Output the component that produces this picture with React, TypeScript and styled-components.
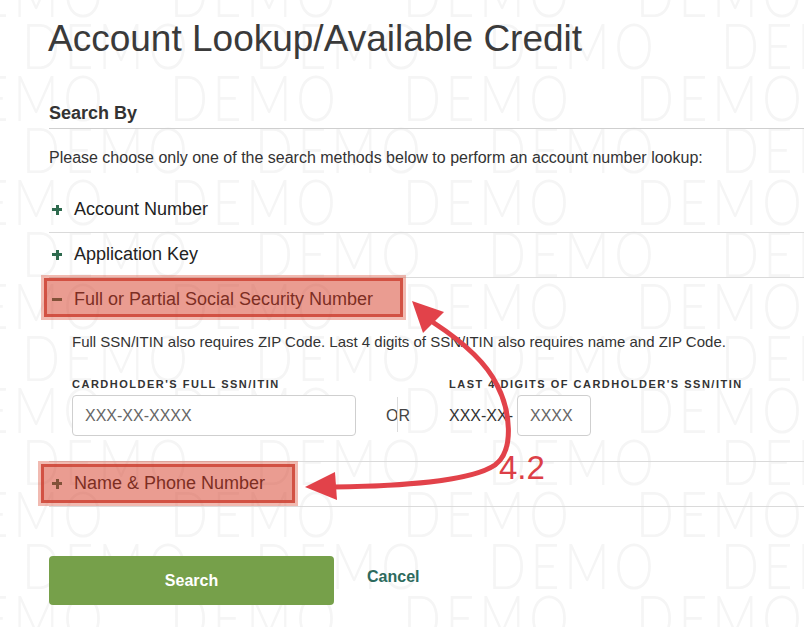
import styled, { createGlobalStyle } from "styled-components";

const GlobalStyle = createGlobalStyle`
  html, body {
    margin: 0;
    padding: 0;
    background: #fff;
  }
  body {
    font-family: "Liberation Sans", Arial, sans-serif;
  }
`;

const Page = styled.div`
  position: relative;
  width: 804px;
  height: 627px;
  overflow: hidden;
  background: #fff;
`;

const Watermark = styled.div`
  position: absolute;
  inset: 0;
  z-index: 0;
  pointer-events: none;
  margin-top: -33px;
`;

const WatermarkRow = styled.div<{ $offset: number }>`
  display: flex;
  height: 52px;
  line-height: 52px;
  margin-left: ${(p) => p.$offset}px;
  white-space: nowrap;
`;

const WatermarkWord = styled.span`
  flex: 0 0 233px;
  display: block;
  font-family: Lato, "Open Sans", sans-serif;
  font-weight: 300;
  font-size: 64px;
  letter-spacing: 6px;
  color: #f5f5f5;
  transform: scaleX(0.78);
  transform-origin: left center;
`;

const Content = styled.div`
  position: relative;
  z-index: 1;
  padding: 17px 0 0 49px;
`;

const Title = styled.h1`
  margin: 0 0 0 -1px;
  font-size: 37px;
  line-height: 44px;
  font-weight: 400;
  color: #3a3a3a;
`;

const SectionHeading = styled.h2`
  margin: 41px 0 0;
  padding-bottom: 4px;
  border-bottom: 1px solid #cfcfcf;
  font-size: 18px;
  line-height: 22px;
  font-weight: 700;
  color: #333;
`;

const Intro = styled.p`
  margin: 19px 0 0;
  font-size: 16px;
  line-height: 20px;
  color: #333;
`;

const Accordion = styled.div`
  margin-top: 20px;
`;

const Item = styled.div`
  border-bottom: 1px solid #dadada;
`;

const ItemHeader = styled.div`
  display: flex;
  align-items: center;
  padding: 10px 0 12px;
  font-size: 18px;
  line-height: 22px;
  color: #222;
`;

const ToggleIcon = styled.span<{ $open: boolean }>`
  position: relative;
  flex: 0 0 10px;
  height: 10px;
  margin: 1px 12px 0 3px;

  &::before,
  &::after {
    content: "";
    position: absolute;
    background: #2e6a4e;
  }
  &::before {
    left: 0;
    right: 0;
    top: 3.5px;
    height: 3px;
  }
  &::after {
    display: ${(p) => (p.$open ? "none" : "block")};
    top: 0;
    bottom: 0;
    left: 3.5px;
    width: 3px;
  }
`;

const Panel = styled.div`
  padding: 10px 0 25px 23px;
`;

const Note = styled.p`
  margin: 0;
  font-size: 15px;
  line-height: 19px;
  color: #333;
`;

const Fields = styled.div`
  display: flex;
  align-items: flex-end;
  margin-top: 26px;
`;

const Field = styled.div`
  display: flex;
  flex-direction: column;
`;

const Label = styled.label`
  margin-bottom: 4px;
  font-size: 11px;
  line-height: 14px;
  font-weight: 700;
  letter-spacing: 1.5px;
  color: #333;
  white-space: nowrap;
`;

const Input = styled.input<{ $width: number }>`
  box-sizing: border-box;
  width: ${(p) => p.$width}px;
  height: 41px;
  padding: 0 12px;
  border: 1px solid #cfcfcf;
  border-radius: 4px;
  background: #fff;
  font-family: "Liberation Sans", Arial, sans-serif;
  font-size: 16px;
  color: #333;
  outline: none;

  &::placeholder {
    color: #666;
  }
`;

const OrBox = styled.div`
  position: relative;
  display: flex;
  align-items: center;
  justify-content: center;
  width: 24px;
  height: 41px;
  margin: 0 39px 0 30px;
  font-size: 16px;
  color: #444;

  &::before {
    content: "";
    position: absolute;
    left: 11px;
    top: 2px;
    bottom: 4px;
    width: 1px;
    background: #dcdcdc;
  }
`;

const InputRow = styled.div`
  display: flex;
  align-items: center;
`;

const Prefix = styled.span`
  margin-right: 4px;
  font-size: 16px;
  color: #333;
`;

const Actions = styled.div`
  display: flex;
  align-items: center;
  margin-top: 49px;
`;

const SearchButton = styled.button`
  width: 285px;
  height: 49px;
  border: none;
  border-radius: 4px;
  background: #76a04a;
  color: #fff;
  font-family: "Liberation Sans", Arial, sans-serif;
  font-size: 16px;
  font-weight: 700;
  cursor: pointer;
`;

const CancelLink = styled.a`
  margin-left: 33px;
  padding-bottom: 7px;
  font-size: 16px;
  font-weight: 700;
  color: #2c6a5d;
  text-decoration: none;
  cursor: pointer;
`;

const Highlight = styled.div<{ $x: number; $y: number; $w: number; $h: number }>`
  position: absolute;
  z-index: 2;
  left: ${(p) => p.$x}px;
  top: ${(p) => p.$y}px;
  width: ${(p) => p.$w}px;
  height: ${(p) => p.$h}px;
  box-sizing: border-box;
  border: 3px solid rgba(222, 90, 70, 0.42);
  background: rgba(214, 58, 36, 0.5);
  background-clip: padding-box;
  box-shadow: inset 0 0 0 3px rgba(200, 50, 34, 0.7);
  pointer-events: none;
`;

const ArrowLayer = styled.svg`
  position: absolute;
  inset: 0;
  z-index: 3;
  pointer-events: none;
`;

const StepLabel = styled.span`
  position: absolute;
  z-index: 3;
  left: 499px;
  top: 449px;
  font-size: 33px;
  line-height: 38px;
  color: #dc3f47;
`;

const accordion = [
  { title: "Account Number", open: false },
  { title: "Application Key", open: false },
  { title: "Full or Partial Social Security Number", open: true },
  { title: "Name & Phone Number", open: false },
];

export default function App() {
  const rows = Array.from({ length: 14 }, (_, i) => i);
  return (
    <Page>
      <GlobalStyle />
      <Watermark aria-hidden="true">
        {rows.map((r) => (
          <WatermarkRow key={r} $offset={r % 2 === 0 ? -63 : -211}>
            {[0, 1, 2, 3, 4].map((c) => (
              <WatermarkWord key={c}>DEMO</WatermarkWord>
            ))}
          </WatermarkRow>
        ))}
      </Watermark>

      <Content>
        <Title>Account Lookup/Available Credit</Title>
        <SectionHeading>Search By</SectionHeading>
        <Intro>
          Please choose only one of the search methods below to perform an account number lookup:
        </Intro>
        <Accordion>
          {accordion.map((item) => (
            <Item key={item.title}>
              <ItemHeader>
                <ToggleIcon $open={item.open} />
                {item.title}
              </ItemHeader>
              {item.open && (
                <Panel>
                  <Note>
                    Full SSN/ITIN also requires ZIP Code. Last 4 digits of SSN/ITIN also requires
                    name and ZIP Code.
                  </Note>
                  <Fields>
                    <Field>
                      <Label>CARDHOLDER'S FULL SSN/ITIN</Label>
                      <Input $width={284} placeholder="XXX-XX-XXXX" />
                    </Field>
                    <OrBox>OR</OrBox>
                    <Field>
                      <Label>LAST 4 DIGITS OF CARDHOLDER'S SSN/ITIN</Label>
                      <InputRow>
                        <Prefix>XXX-XX-</Prefix>
                        <Input $width={74} placeholder="XXXX" />
                      </InputRow>
                    </Field>
                  </Fields>
                </Panel>
              )}
            </Item>
          ))}
        </Accordion>
        <Actions>
          <SearchButton>Search</SearchButton>
          <CancelLink>Cancel</CancelLink>
        </Actions>
      </Content>

      <Highlight $x={41} $y={275} $w={365} $h={45} />
      <Highlight $x={38} $y={461} $w={260} $h={45} />

      <ArrowLayer width={804} height={627} viewBox="0 0 804 627">
        <path
          d="M 334 487 C 400 486, 470 482, 495 465 C 515 450, 510 410, 497 385 C 485 360, 460 340, 434 323"
          fill="none"
          stroke="#e2424a"
          strokeWidth={5}
          strokeLinecap="round"
        />
        <polygon points="412,301 423,333 444,312" fill="#e2424a" />
        <polygon points="305,487 335,472 337,500" fill="#e2424a" />
      </ArrowLayer>
      <StepLabel>4.2</StepLabel>
    </Page>
  );
}
